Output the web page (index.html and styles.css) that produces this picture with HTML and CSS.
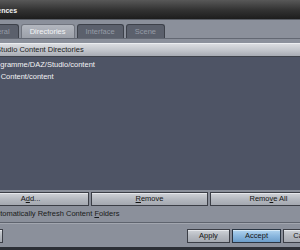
FILE: index.html
```html
<!DOCTYPE html>
<html lang="en">
<head>
  <meta charset="UTF-8">
  <title>Preferences</title>
  <link rel="stylesheet" href="styles.css">
</head>
<body>
  <div class="dialog">
    <div class="titlebar">Preferences</div>

    <div class="tabs">
      <div class="tab">General</div>
      <div class="tab active">Directories</div>
      <div class="tab">Interface</div>
      <div class="tab">Scene</div>
    </div>

    <div class="pane">
      <div class="list-header">DAZ Studio Content Directories</div>
      <div class="list">
        <div class="item">C:/Programme/DAZ/Studio/content</div>
        <div class="item">C:/My Content/content</div>
      </div>

      <div class="list-buttons">
        <button>A<u>d</u>d...</button>
        <button><u>R</u>emove</button>
        <button>Remo<u>v</u>e All</button>
      </div>

      <label class="check-row">
        <span class="checkbox"></span>
        <span>Automatically Refresh Content <u>F</u>olders</span>
      </label>
    </div>

    <div class="separator"></div>

    <div class="footer">
      <button class="help">Help</button>
      <div class="spacer"></div>
      <button class="apply">Apply</button>
      <button class="accept">Accept</button>
      <button class="cancel">Cancel</button>
    </div>
  </div>
</body>
</html>
```

FILE: styles.css
```css
* {
  box-sizing: border-box;
}
body {
  margin: 0;
  width: 300px;
  height: 250px;
  overflow: hidden;
  background: #8b909b;
  font-family: "Liberation Sans", Arial, sans-serif;
  font-size: 7.5px;
}
.dialog {
  margin-left: -32px;
  width: 363px;
  height: 250px;
  padding: 0 4px;
  background: #8b909b;
  border-bottom: 3px solid #2c2f36;
  display: flex;
  flex-direction: column;
}
.titlebar {
  margin: 0 -4px;
  height: 20px;
  padding: 3px 0 0 9px;
  line-height: 16px;
  font-size: 7px;
  font-weight: bold;
  color: #f2f2f2;
  background: linear-gradient(#585858, #343434 50%, #1d1d1d);
  border-bottom: 1px solid #5a5e66;
}
.tabs {
  margin-top: 4px;
  padding-left: 2px;
  height: 14px;
  display: flex;
  gap: 2px;
}
.tab {
  height: 14px;
  padding: 0 8px;
  line-height: 13px;
  color: #959ba6;
  background: #5b606c;
  border: 1px solid #3d414a;
  border-bottom: none;
  border-radius: 3px 3px 0 0;
}
.tab.active {
  color: #f3f4f6;
  background: linear-gradient(#b3b7bf, #9ca0a9);
  border-color: #70747e;
}
.pane {
  border-top: 1px solid #636873;
}
.list-header {
  margin-top: 4px;
  height: 14px;
  padding-left: 7px;
  line-height: 12px;
  color: #1c1c1c;
  background: linear-gradient(#dadce0, #c3c6cc 50%, #a7abb3);
  border-top: 1px solid #eceef1;
  border-bottom: 1px solid #3e424b;
}
.list {
  height: 133px;
  padding: 2px 7px;
  background: #4e5465;
  color: #f2f2f4;
}
.item {
  line-height: 12px;
}
button {
  font-family: inherit;
  font-size: 7.5px;
  color: #141414;
  height: 14px;
  padding: 0;
  line-height: 12px;
  background: linear-gradient(#d0d3d8, #b5b9c0 50%, #a4a8b0);
  border: 1px solid #3b3e46;
  box-shadow: inset 0 1px 0 #e6e8ec;
}
.list-buttons {
  margin-top: 2px;
  display: grid;
  grid-template-columns: 1fr 1fr 1fr;
  gap: 2px;
}
.check-row {
  margin-top: 1px;
  height: 13px;
  display: flex;
  align-items: center;
  gap: 3px;
  padding-left: 7px;
  color: #1a1a1a;
}
.checkbox {
  width: 9px;
  height: 9px;
  background: #d5d7dc;
  border: 1px solid #3b3e46;
}
.separator {
  margin: 2px -4px 0;
  height: 2px;
  border-top: 1px solid #5f646e;
  border-bottom: 1px solid #a2a6af;
}
.footer {
  margin-top: 5px;
  display: flex;
  gap: 2px;
}
.spacer {
  flex: 1;
}
.help {
  width: 31px;
}
.apply {
  width: 43px;
}
.accept {
  width: 49px;
  background: linear-gradient(#b2d5f0, #8ab7de 50%, #6c9dc9);
  border-color: #2a3542;
  box-shadow: inset 0 1px 0 #d6eaf8;
}
.cancel {
  width: 44px;
}
```
